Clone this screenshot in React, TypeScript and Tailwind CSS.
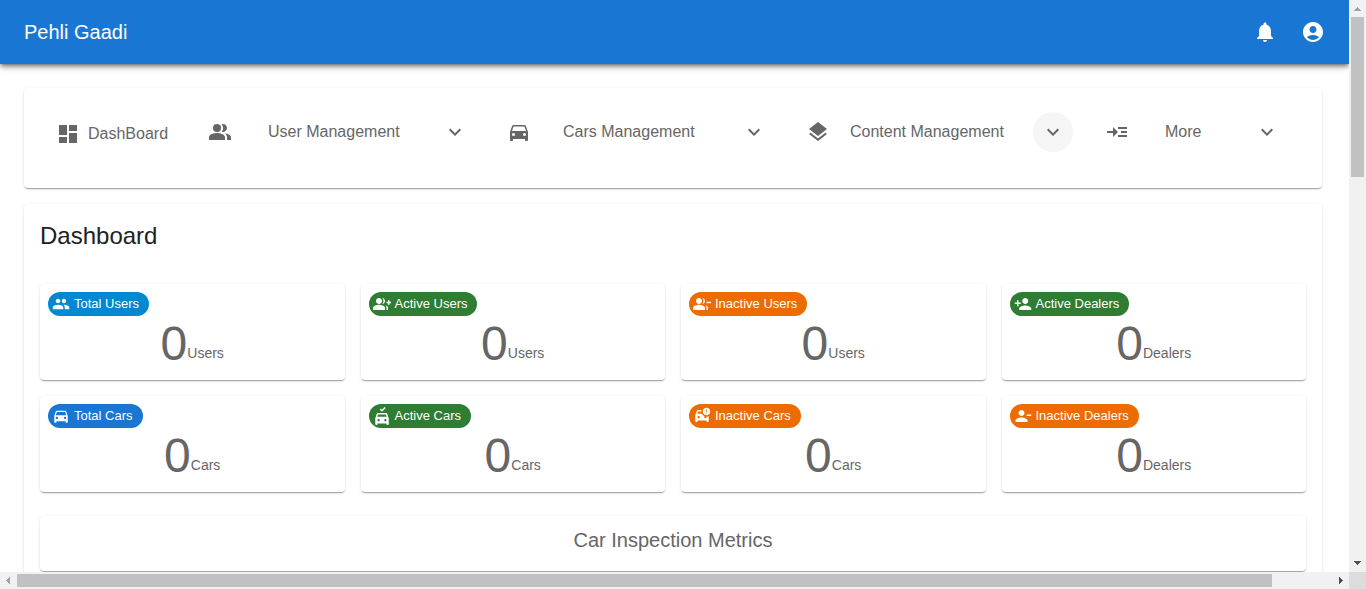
import type { ReactNode } from "react";
import type { IconType } from "react-icons";
import {
  MdAccountCircle,
  MdCarCrash,
  MdDashboard,
  MdDirectionsCar,
  MdExpandMore,
  MdGroupAdd,
  MdGroupRemove,
  MdLayers,
  MdNoCrash,
  MdNotifications,
  MdPeople,
  MdPeopleAlt,
  MdPersonAdd,
  MdPersonRemove,
  MdReadMore,
} from "react-icons/md";

const PAPER =
  "rounded bg-white shadow-[0_2px_1px_-1px_rgba(0,0,0,0.2),0_1px_1px_0_rgba(0,0,0,0.14),0_1px_3px_0_rgba(0,0,0,0.12)]";

type MenuEntry = {
  label: string;
  icon: IconType;
  width: string;
  indent: string;
  highlighted?: boolean;
};

const MENUS: MenuEntry[] = [
  { label: "User Management", icon: MdPeopleAlt, width: "flex-1", indent: "pl-9" },
  { label: "Cars Management", icon: MdDirectionsCar, width: "flex-1", indent: "pl-8" },
  { label: "Content Management", icon: MdLayers, width: "flex-1", indent: "pl-5", highlighted: true },
  { label: "More", icon: MdReadMore, width: "w-[182px]", indent: "pl-9" },
];

type Stat = { title: string; unit: string; value: number; icon: IconType; color: string };

const STATS: Stat[] = [
  { title: "Total Users", unit: "Users", value: 0, icon: MdPeople, color: "bg-[#0288d1]" },
  { title: "Active Users", unit: "Users", value: 0, icon: MdGroupAdd, color: "bg-[#2e7d32]" },
  { title: "Inactive Users", unit: "Users", value: 0, icon: MdGroupRemove, color: "bg-[#ed6c02]" },
  { title: "Active Dealers", unit: "Dealers", value: 0, icon: MdPersonAdd, color: "bg-[#2e7d32]" },
  { title: "Total Cars", unit: "Cars", value: 0, icon: MdDirectionsCar, color: "bg-[#1976d2]" },
  { title: "Active Cars", unit: "Cars", value: 0, icon: MdNoCrash, color: "bg-[#2e7d32]" },
  { title: "Inactive Cars", unit: "Cars", value: 0, icon: MdCarCrash, color: "bg-[#ed6c02]" },
  { title: "Inactive Dealers", unit: "Dealers", value: 0, icon: MdPersonRemove, color: "bg-[#ed6c02]" },
];

function TopBar() {
  return (
    <header className="relative flex h-16 items-center justify-between bg-[#1976d2] pr-3 pl-6 text-white shadow-[0_2px_4px_-1px_rgba(0,0,0,0.5),0_4px_5px_0_rgba(0,0,0,0.18),0_1px_10px_0_rgba(0,0,0,0.12)]">
      <div className="text-xl leading-8">Pehli Gaadi</div>
      <div className="flex">
        <button type="button" aria-label="Notifications" className="flex size-12 items-center justify-center">
          <MdNotifications className="size-6" />
        </button>
        <button type="button" aria-label="Account" className="flex size-12 items-center justify-center">
          <MdAccountCircle className="size-6" />
        </button>
      </div>
    </header>
  );
}

function MainMenu() {
  return (
    <nav className={`${PAPER} flex items-start gap-8 pt-6 pr-[35px] pb-8 pl-8 text-base text-[#666]`}>
      <a href="#dashboard" className="flex h-11 w-[120px] shrink-0 items-center gap-2">
        <MdDashboard className="size-6" />
        DashBoard
      </a>
      {MENUS.map(({ label, icon: Icon, width, indent, highlighted }) => (
        <div key={label} className={`${width} flex h-10 items-center`}>
          <Icon className="size-6 shrink-0" />
          <span className={`${indent} grow whitespace-nowrap`}>{label}</span>
          <button
            type="button"
            aria-label={`Open ${label}`}
            className={`${highlighted ? "bg-[#f5f5f5]" : ""} flex size-10 shrink-0 items-center justify-center rounded-full`}
          >
            <MdExpandMore className="size-6" />
          </button>
        </div>
      ))}
    </nav>
  );
}

function StatCard({ title, unit, value, icon: Icon, color }: Stat) {
  return (
    <article className={`${PAPER} p-2`}>
      <h2 className={`${color} flex h-6 w-fit items-center gap-1 rounded-full pr-[10px] pl-1 text-[13px] font-medium text-white`}>
        <Icon className="size-[18px]" />
        {title}
      </h2>
      <p className="text-center text-5xl leading-[56px] text-[#666]">
        {value}
        <span className="align-[2px] text-sm">{unit}</span>
      </p>
    </article>
  );
}

function Arrow({ points, color }: { points: string; color: string }) {
  return (
    <svg viewBox="0 0 17 17" className={`${color} size-[17px] shrink-0 fill-current`} shapeRendering="crispEdges" aria-hidden="true">
      <polygon points={points} />
    </svg>
  );
}

function ScrollFrame({ children }: { children: ReactNode }) {
  return (
    <div className="grid h-screen grid-cols-[minmax(0,1fr)_17px] grid-rows-[minmax(0,1fr)_17px] bg-white font-['Liberation_Sans',Arial,sans-serif]">
      <div className="overflow-hidden">{children}</div>
      <div className="flex flex-col bg-[#f1f1f1]">
        <Arrow points="5,11 12,11 8.5,7" color="text-[#a3a3a3]" />
        <div className="mx-[2px] flex-[160] bg-[#c1c1c1]" />
        <div className="flex-[378]" />
        <Arrow points="5,6 12,6 8.5,10" color="text-[#505050]" />
      </div>
      <div className="flex bg-[#f1f1f1]">
        <Arrow points="10,5 10,12 6,8.5" color="text-[#a3a3a3]" />
        <div className="my-[2px] flex-[1255] bg-[#c1c1c1]" />
        <div className="flex-[60]" />
        <Arrow points="7,5 7,12 11,8.5" color="text-[#505050]" />
      </div>
      <div className="bg-[#dcdcdc]" />
    </div>
  );
}

export default function App() {
  return (
    <ScrollFrame>
      <TopBar />
      <main className="flex flex-col gap-4 py-6 pr-[27px] pl-6">
        <MainMenu />
        <section className={`${PAPER} p-4`}>
          <h1 className="text-2xl leading-8 text-[#212121]">Dashboard</h1>
          <div className="mt-8 grid grid-cols-4 gap-4">
            {STATS.map((stat) => (
              <StatCard key={stat.title} {...stat} />
            ))}
          </div>
          <div className={`${PAPER} mt-6 pt-2 pb-[15px]`}>
            <h2 className="text-center text-xl leading-8 text-[#666]">Car Inspection Metrics</h2>
          </div>
        </section>
      </main>
    </ScrollFrame>
  );
}
